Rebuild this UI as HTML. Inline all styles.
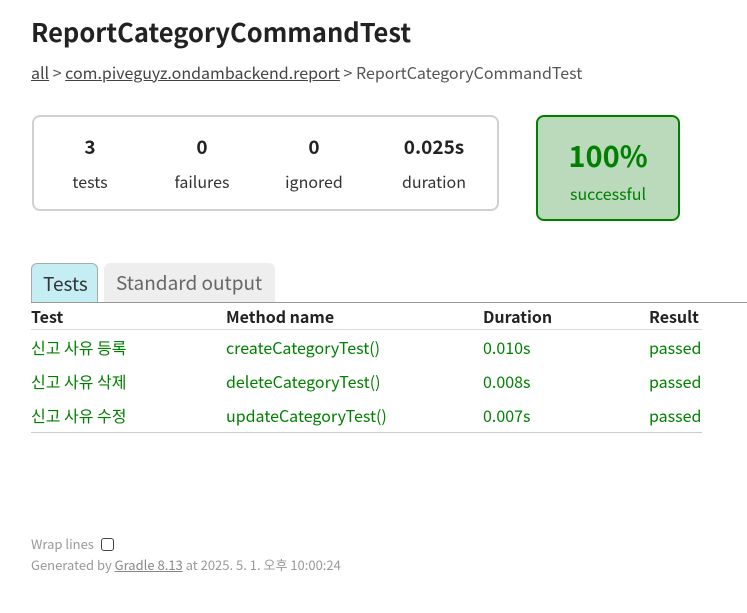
<!DOCTYPE html>
<html><head><meta charset="utf-8"><style>
*{margin:0;padding:0;box-sizing:border-box}
body{width:747px;height:613px;background:#fff;font-family:"Noto Sans CJK KR","Liberation Sans",sans-serif;color:#333;position:relative;overflow:hidden}
.a{position:absolute;white-space:nowrap}
h1{position:absolute;left:31px;top:13px;font-size:25.5px;font-weight:700;color:#222;line-height:38px}
.bc{left:31px;top:60px;font-size:16px;color:#555}
.bc u{color:#444}
.sum{left:32px;top:115px;width:467px;height:96px;border:2px solid #d0d0d0;border-radius:8px}
.n{font-size:19px;font-weight:700;color:#222;text-align:center;width:100px}
.l{font-size:16px;color:#333;text-align:center;width:100px}
.succ{left:536px;top:115px;width:144px;height:106px;border:2px solid #008000;border-radius:8px;background:#bbd9bb;text-align:center;color:#008000}
.tab{top:263px;height:39px;border-radius:6px 6px 0 0;font-size:19px;padding:6px 11px 0}
.th{top:304px;font-size:16px;font-weight:700;color:#222}
.td{font-size:16px;color:#008000}
</style></head><body>
<h1>ReportCategoryCommandTest</h1>
<div class="a bc"><u>all</u> &gt; <u>com.piveguyz.ondambackend.report</u> &gt; ReportCategoryCommandTest</div>
<div class="a sum"></div>
<div class="a n" style="left:40px;top:133px">3</div>
<div class="a l" style="left:40px;top:169px">tests</div>
<div class="a n" style="left:152px;top:133px">0</div>
<div class="a l" style="left:152px;top:169px">failures</div>
<div class="a n" style="left:264px;top:133px">0</div>
<div class="a l" style="left:264px;top:169px">ignored</div>
<div class="a n" style="left:384px;top:133px">0.025s</div>
<div class="a l" style="left:384px;top:169px">duration</div>
<div class="a succ"><div style="font-size:29px;font-weight:700;margin-top:20px;line-height:36px">100%</div><div style="font-size:16px;margin-top:8px">successful</div></div>
<div class="a tab" style="left:31px;width:67px;background:#c5eef4;border:1px solid #aaa;border-bottom:none;color:#333">Tests</div>
<div class="a tab" style="left:104px;width:171px;background:#eee;color:#666;padding-left:12px">Standard output</div>
<div class="a" style="left:31px;top:302px;width:716px;height:1px;background:#999"></div>
<div class="a th" style="left:31px">Test</div>
<div class="a th" style="left:226px">Method name</div>
<div class="a th" style="left:483px">Duration</div>
<div class="a th" style="left:649px">Result</div>
<div class="a" style="left:31px;top:329px;width:671px;height:1px;background:#ddd"></div>
<div class="a td" style="left:31px;top:335px">신고 사유 등록</div>
<div class="a td" style="left:226px;top:335px">createCategoryTest()</div>
<div class="a td" style="left:483px;top:335px">0.010s</div>
<div class="a td" style="left:649px;top:335px">passed</div>
<div class="a td" style="left:31px;top:369px">신고 사유 삭제</div>
<div class="a td" style="left:226px;top:369px">deleteCategoryTest()</div>
<div class="a td" style="left:483px;top:369px">0.008s</div>
<div class="a td" style="left:649px;top:369px">passed</div>
<div class="a td" style="left:31px;top:403px">신고 사유 수정</div>
<div class="a td" style="left:226px;top:403px">updateCategoryTest()</div>
<div class="a td" style="left:483px;top:403px">0.007s</div>
<div class="a td" style="left:649px;top:403px">passed</div>
<div class="a" style="left:31px;top:432px;width:671px;height:1px;background:#ccc"></div>
<div class="a" style="left:31px;top:534px;font-size:13px;color:#999">Wrap lines <span style="display:inline-block;width:13px;height:13px;border:1.5px solid #444;border-radius:3px;vertical-align:-2px;margin-left:4px"></span></div>
<div class="a" style="left:31px;top:555px;font-size:13px;color:#999">Generated by <u style="color:#888">Gradle 8.13</u> at 2025. 5. 1. 오후 10:00:24</div>
</body></html>
